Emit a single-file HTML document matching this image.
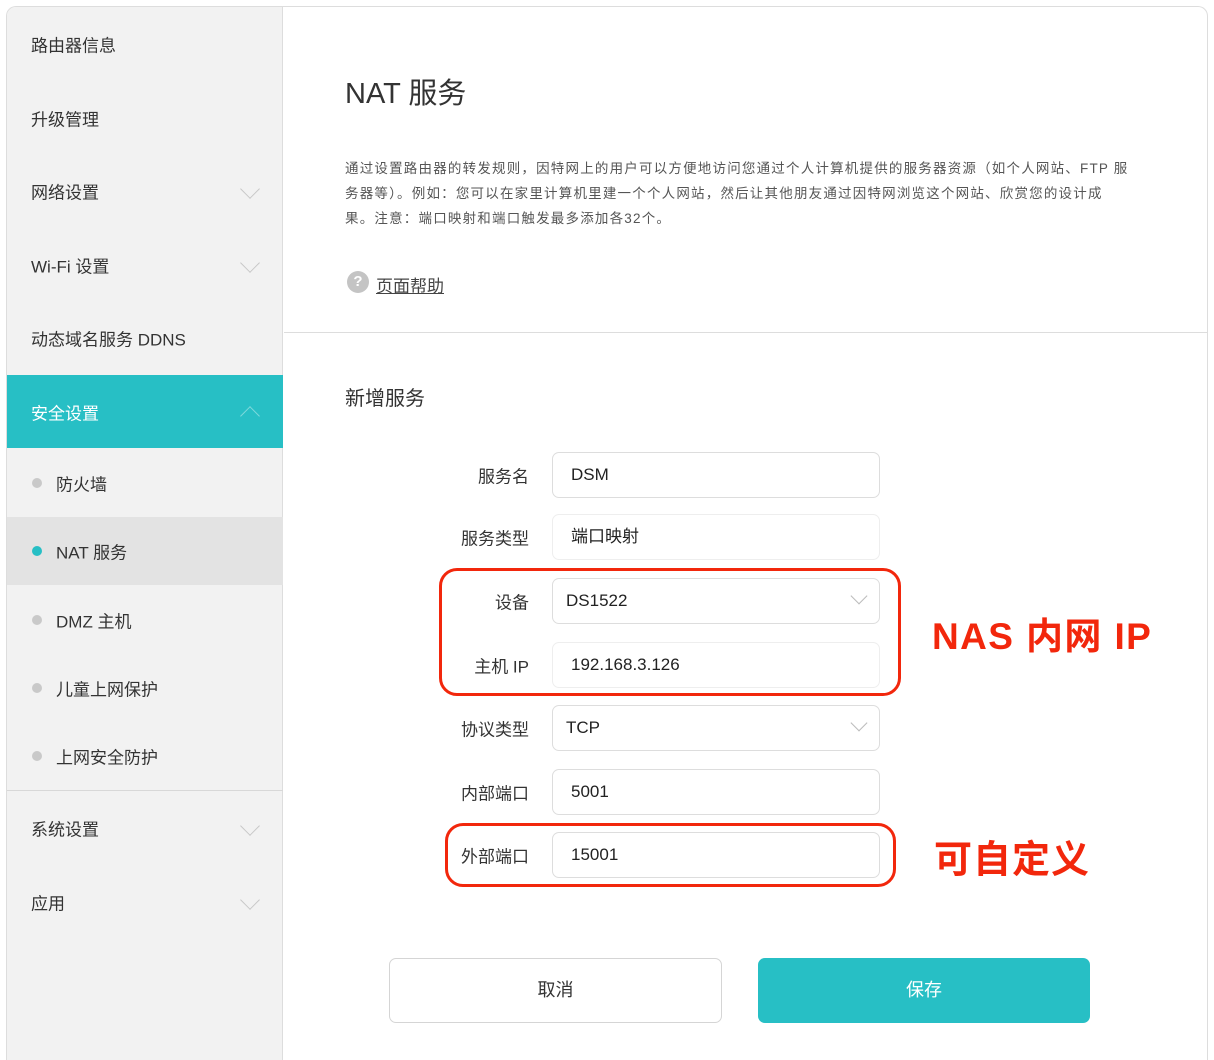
<!DOCTYPE html>
<html style="width:1214px;height:1060px;overflow:hidden"><head><meta charset="utf-8"><style>
*{box-sizing:border-box;margin:0;padding:0}
body{width:1214px;height:1060px;background:#fff;font-family:"Liberation Sans","Noto Sans CJK SC",sans-serif;color:#333;position:relative;overflow:hidden}
.frame{position:absolute;left:6px;top:6px;width:1202px;height:1054px;border:1px solid #ddd;border-bottom:none;border-radius:10px 10px 0 0;overflow:hidden;background:#fff}
.side{position:absolute;left:0;top:0;width:276px;height:100%;background:#f2f2f2;border-right:1px solid #ddd}
.it{position:absolute;left:24px;font-size:17px;color:#333;transform:translateY(-50%)}
.chev{position:absolute;left:236px;width:14px;height:14px;border-right:1.5px solid #c8c8c8;border-bottom:1.5px solid #c8c8c8;transform:rotate(45deg)}
.sub{position:absolute;left:49px;font-size:17px;transform:translateY(-50%)}
.dot{position:absolute;left:25px;width:10px;height:10px;border-radius:50%;background:#c9c9c9;transform:translateY(-50%)}
.abs{position:absolute}
.lbl{position:absolute;right:685px;font-size:17px;color:#333;transform:translateY(-50%);white-space:nowrap}
.inp{position:absolute;left:552px;width:328px;height:46px;border:1.5px solid #ddd;border-radius:7px;font-size:17px;padding-left:18px;line-height:43px;color:#222}
.ichev{position:absolute;right:14px;top:11px;width:12px;height:12px;border-right:1.5px solid #bbb;border-bottom:1.5px solid #bbb;transform:rotate(45deg)}
.red{position:absolute;border:3px solid #f2270c;border-radius:18px}
.rt{position:absolute;color:#f2270c;font-weight:bold;transform:translateY(-50%);white-space:nowrap}
</style></head><body>
<div class="frame">
<div class="side">
<div class="it" style="top:37px">路由器信息</div>
<div class="it" style="top:111px">升级管理</div>
<div class="it" style="top:184px">网络设置</div><div class="chev" style="top:175px"></div>
<div class="it" style="top:258px">Wi-Fi 设置</div><div class="chev" style="top:249px"></div>
<div class="it" style="top:331px">动态域名服务 DDNS</div>
<div class="abs" style="left:0;top:368px;width:276px;height:73px;background:#27bfc5"></div>
<div class="it" style="top:405px;color:#fff">安全设置</div>
<div class="chev" style="top:402px;transform:rotate(225deg);border-color:#7ed9dc"></div>
<div class="dot" style="top:476px"></div><div class="sub" style="top:476px">防火墙</div>
<div class="abs" style="left:0;top:510px;width:276px;height:68px;background:#e3e3e3"></div>
<div class="dot" style="top:544px;background:#27bfc5"></div><div class="sub" style="top:544px">NAT 服务</div>
<div class="dot" style="top:613px"></div><div class="sub" style="top:613px">DMZ 主机</div>
<div class="dot" style="top:681px"></div><div class="sub" style="top:681px">儿童上网保护</div>
<div class="dot" style="top:749px"></div><div class="sub" style="top:749px">上网安全防护</div>
<div class="abs" style="left:0;top:783px;width:276px;height:1px;background:#d8d8d8"></div>
<div class="it" style="top:821px">系统设置</div><div class="chev" style="top:812px"></div>
<div class="it" style="top:895px">应用</div><div class="chev" style="top:886px"></div>
</div>
<div class="abs" style="left:277px;top:325px;width:925px;height:1px;background:#ddd"></div>
</div>
<div class="abs" style="left:345px;top:70px;font-size:29px;color:#333">NAT 服务</div>
<div class="abs" style="left:345px;top:156px;font-size:13.5px;line-height:25px;color:#555;white-space:nowrap;letter-spacing:1.2px">通过设置路由器的转发规则，因特网上的用户可以方便地访问您通过个人计算机提供的服务器资源（如个人网站、FTP 服<br>务器等）。例如：您可以在家里计算机里建一个个人网站，然后让其他朋友通过因特网浏览这个网站、欣赏您的设计成<br>果。注意：端口映射和端口触发最多添加各32个。</div>
<div class="abs" style="left:347px;top:271px;width:22px;height:22px;border-radius:50%;background:#c4c4c4;color:#fff;font-size:15px;text-align:center;line-height:22px;font-weight:bold">?</div>
<div class="abs" style="left:376px;top:272px;font-size:17px;color:#444;text-decoration:underline">页面帮助</div>
<div class="abs" style="left:345px;top:382px;font-size:20px;color:#333">新增服务</div>

<div class="lbl" style="top:475px">服务名</div><div class="inp" style="top:452px">DSM</div>
<div class="lbl" style="top:537px">服务类型</div><div class="inp" style="top:514px;border-color:#eee">端口映射</div>
<div class="lbl" style="top:601px">设备</div><div class="inp" style="top:578px;padding-left:13px">DS1522<div class="ichev"></div></div>
<div class="lbl" style="top:665px">主机 IP</div><div class="inp" style="top:642px;border-color:#eee">192.168.3.126</div>
<div class="lbl" style="top:728px">协议类型</div><div class="inp" style="top:705px;padding-left:13px">TCP<div class="ichev"></div></div>
<div class="lbl" style="top:792px">内部端口</div><div class="inp" style="top:769px">5001</div>
<div class="lbl" style="top:855px">外部端口</div><div class="inp" style="top:832px">15001</div>

<div class="red" style="left:439px;top:568px;width:462px;height:128px"></div>
<div class="red" style="left:445px;top:823px;width:451px;height:64px"></div>
<div class="rt" style="left:932px;top:633px;font-size:37px;letter-spacing:1.4px">NAS 内网 IP</div>
<div class="rt" style="left:934px;top:856px;font-size:38px;letter-spacing:1px">可自定义</div>

<div class="abs" style="left:389px;top:958px;width:333px;height:65px;border:1.5px solid #d5d5d5;border-radius:7px;text-align:center;line-height:62px;font-size:18px;color:#333">取消</div>
<div class="abs" style="left:758px;top:958px;width:332px;height:65px;background:#27bfc5;border-radius:7px;text-align:center;line-height:65px;font-size:18px;color:#fff">保存</div>
</body></html>
